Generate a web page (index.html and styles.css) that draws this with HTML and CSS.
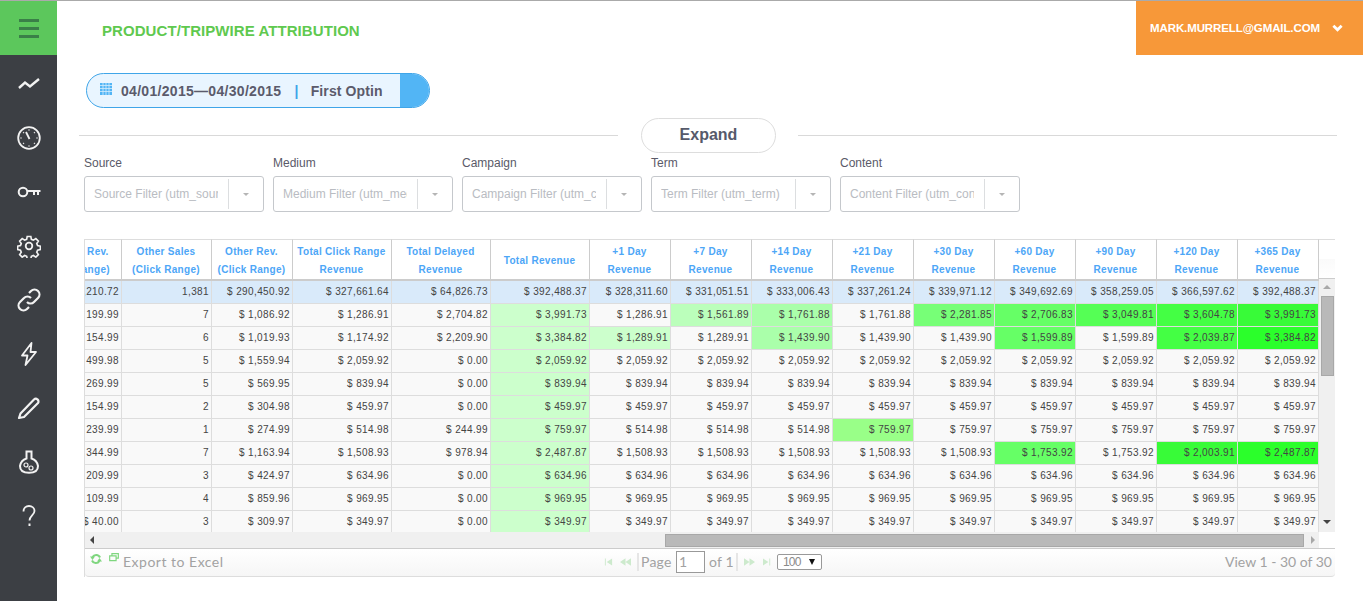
FILE: index.html
```html
<!DOCTYPE html>
<html lang="en">
<head>
<meta charset="utf-8">
<title>Product/Tripwire Attribution</title>
<link rel="stylesheet" href="styles.css">
</head>
<body>
<aside class="sidebar">
  <div class="menu-btn"><span></span><span></span><span></span></div>
  <nav class="nav">
    <a class="nav-item"><svg viewBox="0 0 24 24" class="ico"><path d="M2 16l6-5.500 5 4L22 7" stroke-width="2.400"/></svg></a>
    <a class="nav-item"><svg viewBox="0 0 24 24" class="ico"><circle cx="12" cy="12" r="10.800" stroke-width="1.800"/><path d="M9 6l3.500 7" stroke-width="1.800"/><path d="M12 3.500v1M17.800 6.200l-.7.7M20.500 12h-1M17.800 17.800l-.7-.7M12 20.500v-1M6.200 17.800l.7-.7M3.500 12h1M6.200 6.200l.7.7" stroke-width="1.500"/></svg></a>
    <a class="nav-item"><svg viewBox="0 0 24 24" class="ico"><circle cx="6" cy="12" r="4.300" stroke-width="2"/><path d="M10.300 11H23.500M17 11v4M21 11v4" stroke-width="2"/></svg></a>
    <a class="nav-item"><svg viewBox="0 0 24 24" class="ico"><circle cx="12" cy="12" r="3.300" stroke-width="1.800"/><path d="M10 1.500h4l.6 3.200 2.200.9 2.700-1.800 2.800 2.800-1.800 2.700.9 2.200 3.100.6v3.800l-3.100.6-.9 2.200 1.800 2.700-2.800 2.800-2.700-1.800-2.200.9-.6 2.700h-4l-.6-2.700-2.200-.9-2.700 1.800-2.800-2.800 1.800-2.700-.9-2.200-3.100-.6v-3.800l3.100-.6.9-2.200-1.800-2.700 2.800-2.800 2.700 1.800 2.200-.9z" stroke-width="1.800" transform="translate(1.100 1.100) scale(.91)"/></svg></a>
    <a class="nav-item"><svg viewBox="0 0 24 24" class="ico"><path d="M10 14a4.800 4.800 0 0 0 7 0l4-4a4.900 4.900 0 0 0-7-7l-2 2" stroke-width="2.200"/><path d="M14 10a4.800 4.800 0 0 0-7 0l-4 4a4.900 4.900 0 0 0 7 7l2-2" stroke-width="2.200"/></svg></a>
    <a class="nav-item"><svg viewBox="0 0 24 24" class="ico"><path d="M14.500 1L5 13.500h5.500L8.500 23 19 10h-5.500z" stroke-width="1.800" stroke-linejoin="round"/></svg></a>
    <a class="nav-item"><svg viewBox="0 0 24 24" class="ico"><path d="M3.500 17.500L17 3.500a2.500 2.500 0 0 1 3.500 0 2.500 2.500 0 0 1 .5 3.500L7 21l-5 1z" stroke-width="2.200" stroke-linejoin="round"/></svg></a>
    <a class="nav-item"><svg viewBox="0 0 24 24" class="ico"><path d="M8.500 1.500h7M9.500 1.500v7a9.500 9.500 0 0 0-6.500 7.500c0 4 3 6.800 9 6.800s9-2.800 9-6.800a9.500 9.500 0 0 0-6.500-7.500v-7" stroke-width="2"/><circle cx="9" cy="15" r="2" stroke-width="1.200"/><circle cx="14" cy="18" r="2" stroke-width="1.200"/></svg></a>
    <a class="nav-item"><svg viewBox="0 0 24 24" class="ico"><path d="M6.500 7.500C6.500 4 9 2 12 2s5.500 2 5.500 5c0 4-5 5-5 9.500" stroke-width="1.800"/><path d="M12.500 19.500v2.500" stroke-width="2"/></svg></a>
  </nav>
</aside>
<main class="main">
  <header class="topbar">
    <h1 class="title">PRODUCT/TRIPWIRE ATTRIBUTION</h1>
    <div class="user"><span>MARK.MURRELL@GMAIL.COM</span><svg viewBox="0 0 12 8" class="chev"><path d="M1.500 1.500L6 6l4.500-4.500"/></svg></div>
  </header>
  <section class="content">
    <div class="pill">
      <div class="pill-body">
        <svg viewBox="0 0 12 12" class="cal"><rect width="12" height="12" fill="#52b5f5"/><path d="M0 2.500h12M0 5.500h12M0 8.500h12M3 0v12M6 0v12M9 0v12" stroke="#d6ecfd" stroke-width=".8"/></svg>
        <span class="pill-dates">04/01/2015—04/30/2015</span>
        <span class="pill-sep">|</span>
        <span class="pill-opt">First Optin</span>
      </div>
      <div class="pill-end"></div>
    </div>
    <div class="expand-row">
      <span class="rule"></span>
      <button class="expand">Expand</button>
      <span class="rule"></span>
    </div>
    <div class="filters">
      <div class="filter"><label>Source</label><div class="select"><span class="ph">Source Filter (utm_source)</span><span class="caret-box"><i class="caret"></i></span></div></div>
      <div class="filter"><label>Medium</label><div class="select"><span class="ph">Medium Filter (utm_medium)</span><span class="caret-box"><i class="caret"></i></span></div></div>
      <div class="filter"><label>Campaign</label><div class="select"><span class="ph">Campaign Filter (utm_campaign)</span><span class="caret-box"><i class="caret"></i></span></div></div>
      <div class="filter"><label>Term</label><div class="select"><span class="ph">Term Filter (utm_term)</span><span class="caret-box"><i class="caret"></i></span></div></div>
      <div class="filter"><label>Content</label><div class="select"><span class="ph">Content Filter (utm_content)</span><span class="caret-box"><i class="caret"></i></span></div></div>
    </div>
    <div class="grid">
      <div class="grid-top">
        <div class="clip">
          <table class="tbl">
            <colgroup><col class="c90"><col class="c90"><col class="c81"><col class="c99"><col class="c99"><col class="c99"><col class="c81"><col class="c81"><col class="c81"><col class="c81"><col class="c81"><col class="c81"><col class="c81"><col class="c81"><col class="c81"></colgroup>
            <thead><tr>
              <th>Tripwire Rev.<br>(Click Range)</th><th>Other Sales<br>(Click Range)</th><th>Other Rev.<br>(Click Range)</th><th>Total Click Range<br>Revenue</th><th>Total Delayed<br>Revenue</th><th>Total Revenue</th><th>+1 Day<br>Revenue</th><th>+7 Day<br>Revenue</th><th>+14 Day<br>Revenue</th><th>+21 Day<br>Revenue</th><th>+30 Day<br>Revenue</th><th>+60 Day<br>Revenue</th><th>+90 Day<br>Revenue</th><th>+120 Day<br>Revenue</th><th>+365 Day<br>Revenue</th>
            </tr></thead>
            <tbody>
              <tr class="total"><td>$ 101,210.72</td><td>1,381</td><td>$ 290,450.92</td><td>$ 327,661.64</td><td>$ 64,826.73</td><td>$ 392,488.37</td><td>$ 328,311.60</td><td>$ 331,051.51</td><td>$ 333,006.43</td><td>$ 337,261.24</td><td>$ 339,971.12</td><td>$ 349,692.69</td><td>$ 358,259.05</td><td>$ 366,597.62</td><td>$ 392,488.37</td></tr>
              <tr><td>$ 199.99</td><td>7</td><td>$ 1,086.92</td><td>$ 1,286.91</td><td>$ 2,704.82</td><td class="g1">$ 3,991.73</td><td>$ 1,286.91</td><td class="g2">$ 1,561.89</td><td class="g3">$ 1,761.88</td><td>$ 1,761.88</td><td class="g5">$ 2,281.85</td><td class="g6">$ 2,706.83</td><td class="g7">$ 3,049.81</td><td class="g8">$ 3,604.78</td><td class="g9">$ 3,991.73</td></tr>
              <tr><td>$ 154.99</td><td>6</td><td>$ 1,019.93</td><td>$ 1,174.92</td><td>$ 2,209.90</td><td class="g1">$ 3,384.82</td><td class="g1">$ 1,289.91</td><td>$ 1,289.91</td><td class="g3">$ 1,439.90</td><td>$ 1,439.90</td><td>$ 1,439.90</td><td class="g6">$ 1,599.89</td><td>$ 1,599.89</td><td class="g8">$ 2,039.87</td><td class="g10">$ 3,384.82</td></tr>
              <tr><td>$ 499.98</td><td>5</td><td>$ 1,559.94</td><td>$ 2,059.92</td><td>$ 0.00</td><td class="g1">$ 2,059.92</td><td>$ 2,059.92</td><td>$ 2,059.92</td><td>$ 2,059.92</td><td>$ 2,059.92</td><td>$ 2,059.92</td><td>$ 2,059.92</td><td>$ 2,059.92</td><td>$ 2,059.92</td><td>$ 2,059.92</td></tr>
              <tr><td>$ 269.99</td><td>5</td><td>$ 569.95</td><td>$ 839.94</td><td>$ 0.00</td><td class="g1">$ 839.94</td><td>$ 839.94</td><td>$ 839.94</td><td>$ 839.94</td><td>$ 839.94</td><td>$ 839.94</td><td>$ 839.94</td><td>$ 839.94</td><td>$ 839.94</td><td>$ 839.94</td></tr>
              <tr><td>$ 154.99</td><td>2</td><td>$ 304.98</td><td>$ 459.97</td><td>$ 0.00</td><td class="g1">$ 459.97</td><td>$ 459.97</td><td>$ 459.97</td><td>$ 459.97</td><td>$ 459.97</td><td>$ 459.97</td><td>$ 459.97</td><td>$ 459.97</td><td>$ 459.97</td><td>$ 459.97</td></tr>
              <tr><td>$ 239.99</td><td>1</td><td>$ 274.99</td><td>$ 514.98</td><td>$ 244.99</td><td class="g1">$ 759.97</td><td>$ 514.98</td><td>$ 514.98</td><td>$ 514.98</td><td class="g4">$ 759.97</td><td>$ 759.97</td><td>$ 759.97</td><td>$ 759.97</td><td>$ 759.97</td><td>$ 759.97</td></tr>
              <tr><td>$ 344.99</td><td>7</td><td>$ 1,163.94</td><td>$ 1,508.93</td><td>$ 978.94</td><td class="g1">$ 2,487.87</td><td>$ 1,508.93</td><td>$ 1,508.93</td><td>$ 1,508.93</td><td>$ 1,508.93</td><td>$ 1,508.93</td><td class="g6">$ 1,753.92</td><td>$ 1,753.92</td><td class="g9">$ 2,003.91</td><td class="g10">$ 2,487.87</td></tr>
              <tr><td>$ 209.99</td><td>3</td><td>$ 424.97</td><td>$ 634.96</td><td>$ 0.00</td><td class="g1">$ 634.96</td><td>$ 634.96</td><td>$ 634.96</td><td>$ 634.96</td><td>$ 634.96</td><td>$ 634.96</td><td>$ 634.96</td><td>$ 634.96</td><td>$ 634.96</td><td>$ 634.96</td></tr>
              <tr><td>$ 109.99</td><td>4</td><td>$ 859.96</td><td>$ 969.95</td><td>$ 0.00</td><td class="g1">$ 969.95</td><td>$ 969.95</td><td>$ 969.95</td><td>$ 969.95</td><td>$ 969.95</td><td>$ 969.95</td><td>$ 969.95</td><td>$ 969.95</td><td>$ 969.95</td><td>$ 969.95</td></tr>
              <tr><td>$ 40.00</td><td>3</td><td>$ 309.97</td><td>$ 349.97</td><td>$ 0.00</td><td class="g1">$ 349.97</td><td>$ 349.97</td><td>$ 349.97</td><td>$ 349.97</td><td>$ 349.97</td><td>$ 349.97</td><td>$ 349.97</td><td>$ 349.97</td><td>$ 349.97</td><td>$ 349.97</td></tr>
            </tbody>
          </table>
        </div>
        <div class="vcol">
          <div class="vhead"></div>
          <div class="vbar">
            <i class="arr-up"></i>
            <div class="vthumb"></div>
            <i class="arr-down"></i>
          </div>
        </div>
      </div>
      <div class="hbar">
        <i class="arr-left"></i>
        <div class="hthumb"></div>
        <i class="arr-right"></i>
      </div>
      <div class="pager">
        <div class="pager-left">
          <svg viewBox="0 0 12 12" class="pg-ico"><path d="M10 4.500A4.200 4.200 0 0 0 2.500 4M2 7.500A4.200 4.200 0 0 0 9.500 8" stroke="#7fd67f" stroke-width="2" fill="none"/><path d="M0 3.500h5L2.500 7zM12 8.500H7L9.500 5z" fill="#7fd67f"/></svg>
          <svg viewBox="0 0 12 12" class="pg-ico pg-ico2"><path d="M3.500 3.500V.8h7.700v5.400H8.500M.8 3.500h7.700v5.700H.8z" stroke="#7fd67f" stroke-width="1.400" fill="none"/></svg>
          <span class="export">Export to Excel</span>
        </div>
        <div class="pager-mid">
          <svg viewBox="0 0 10 8" class="pg-nav"><path d="M1 0v8h1V0zM9 0v8L3 4z"/></svg>
          <svg viewBox="0 0 12 8" class="pg-nav pg-nav2"><path d="M6 0v8L0 4zM12 0v8L6 4z"/></svg>
          <span class="sep sep-a"></span>
          <span class="pg-word">Page</span>
          <span class="page-input">1</span>
          <span class="pg-of">of 1</span>
          <span class="sep sep-b"></span>
          <svg viewBox="0 0 12 8" class="pg-nav pg-nav3"><path d="M0 0v8l6-4zM6 0v8l6-4z"/></svg>
          <svg viewBox="0 0 10 8" class="pg-nav pg-nav4"><path d="M0 0v8l6-4zM7 0v8h1V0z"/></svg>
          <span class="page-size">100<i class="ps-arrow"></i></span>
        </div>
        <div class="pager-right">View 1 - 30 of 30</div>
      </div>
    </div>
  </section>
</main>
</body>
</html>
```
FILE: styles.css
```css
* { box-sizing: border-box; }
html, body { margin: 0; height: 601px; overflow: hidden; }
body { display: flex; background: #fff; font-family: "Liberation Sans", Arial, sans-serif; border-top: 1px solid #aaa; }

.sidebar { width: 57px; flex: none; height: 600px; background: #3c3f44; }
.menu-btn { height: 54px; background: #5cc75c; display: flex; flex-direction: column; justify-content: center; align-items: center; gap: 5px; }
.menu-btn span { display: block; width: 20px; height: 3px; background: #3a7f48; }
.nav { display: flex; flex-direction: column; padding-top: 2px; }
.nav-item { height: 54px; display: flex; align-items: center; justify-content: center; }
.ico { width: 24px; height: 24px; fill: none; stroke: #f2f2f2; }

.main { flex: 1; min-width: 0; display: flex; flex-direction: column; }
.topbar { height: 54px; display: flex; justify-content: space-between; }
.title { margin: 0; padding: 21px 0 0 45px; font-size: 15px; line-height: 18px; font-weight: 700; letter-spacing: .07px; color: #5fc94f; }
.user { width: 227px; background: #f79839; color: #fff; font-weight: 700; font-size: 11.500px; display: flex; align-items: center; padding-left: 14px; gap: 12px; letter-spacing: -.1px; }
.chev { width: 11px; height: 8px; fill: none; stroke: #fff; stroke-width: 3; }

.content { padding: 18px 26px 0 27px; }
.pill { margin-left: 2px; width: 344px; height: 35px; border: 1px solid #3fa5e8; border-radius: 18px; display: flex; overflow: hidden; background: #e9f5ff; }
.pill-body { flex: 1; display: flex; align-items: center; padding-left: 13px; font-weight: 700; font-size: 14px; color: #5b5b6b; letter-spacing: .3px; white-space: nowrap; }
.cal { width: 12px; height: 12px; margin-right: 9px; margin-top: -4px; }
.pill-sep { color: #3fa5e8; margin: 0 12px 0 13px; }
.pill-opt { letter-spacing: .12px; }
.pill-end { width: 29px; flex: none; background: #52b5f5; }

.expand-row { display: flex; align-items: center; margin: 10px 0 0 -5px; height: 35px; }
.rule { flex: 1; height: 1px; background: #d9d9d9; }
.expand { width: 135px; height: 35px; margin: 0 22px 0 23px; padding: 0 0 2px; background: #fff; border: 1px solid #ddd; border-radius: 18px; font: 700 16px "Liberation Sans", Arial, sans-serif; color: #565a6b; }

.filters { display: flex; gap: 9px; margin-top: 1px; }
.filter { width: 180px; }
.filter label { display: block; font-size: 12px; line-height: 18px; color: #5a5a68; margin-bottom: 4px; }
.select { height: 36px; border: 1px solid #c5c8cc; border-radius: 3px; display: flex; align-items: center; padding: 2px 0 2px 9px; }
.ph { width: 124px; flex: none; overflow: hidden; white-space: nowrap; font-size: 12px; color: #b9bcc2; }
.caret-box { flex: 1; align-self: stretch; margin-left: 10px; border-left: 1px solid #dcdee0; display: flex; align-items: center; justify-content: center; }
.caret { width: 0; height: 0; border: 3.500px solid transparent; border-top: 3.500px solid #b5b5b5; border-bottom: 0; }

.grid { margin-top: 27px; border-left: 1px solid #ddd; width: 1251px; }
.grid-top { display: flex; height: 293px; }
.clip { width: 1234px; height: 293px; overflow: hidden; }
.tbl { margin-left: -53px; table-layout: fixed; width: 1287px; border-collapse: separate; border-spacing: 0; font-size: 10px; letter-spacing: .38px; }
.c90 { width: 90px; }
.c81 { width: 81px; }
.c99 { width: 99px; }
.tbl th { height: 41px; padding: 3px 1px 0 0; border-top: 1px solid #ddd; border-right: 1px solid #ccc; border-bottom: 2px solid #ccc; font-weight: 700; color: #4da6f7; line-height: 18px; letter-spacing: .3px; background: #fff; overflow: hidden; white-space: nowrap; }
.tbl td { height: 23px; padding: 0 2px 1px 0; border-right: 1px solid #ddd; border-bottom: 1px solid #ddd; background: #f9f9f9; color: #444; text-align: right; white-space: nowrap; overflow: hidden; }
.tbl tr.total td { background: #d9eafa; }
.tbl td.g1 { background: #ccffcc; }
.tbl td.g2 { background: #bbffbb; }
.tbl td.g3 { background: #aaffaa; }
.tbl td.g4 { background: #99ff88; }
.tbl td.g5 { background: #77ff77; }
.tbl td.g6 { background: #66ff66; }
.tbl td.g7 { background: #55ff55; }
.tbl td.g8 { background: #44ff44; }
.tbl td.g9 { background: #38fb38; }
.tbl td.g10 { background: #2bff2b; }

.vcol { width: 16px; flex: none; display: flex; flex-direction: column; }
.vhead { height: 40px; border-top: 1px solid #ddd; border-bottom: 1px solid #ccc; background: linear-gradient(#fff, #fff 50%, #fafafa 50%, #fff); }
.vbar { flex: 1; background: #f0f0f0; display: flex; flex-direction: column; align-items: center; }
.arr-up { width: 0; height: 0; margin-top: 6px; border: 4px solid transparent; border-bottom: 4px solid #a8a8a8; border-top: 0; }
.vthumb { width: 13px; height: 80px; margin-top: 7px; background: #b9b9b9; border: 1px solid #a8a8a8; }
.arr-down { width: 0; height: 0; margin-top: auto; margin-bottom: 8px; border: 4px solid transparent; border-top: 4px solid #444; border-bottom: 0; }

.hbar { height: 16px; width: 1234px; background: #f0f0f0; display: flex; align-items: center; padding-left: 5px; }
.arr-left { width: 0; height: 0; border: 4px solid transparent; border-right: 4px solid #444; border-left: 0; }
.hthumb { width: 639px; height: 13px; margin-left: 571px; background: #b9b9b9; border: 1px solid #a8a8a8; }
.arr-right { width: 0; height: 0; margin-left: 7px; border: 4px solid transparent; border-left: 4px solid #a8a8a8; border-right: 0; }

.pager { height: 29px; padding-bottom: 2px; border-top: 1px solid #ccc; border-bottom: 1px solid #ddd; border-radius: 0 0 4px 4px; background: linear-gradient(#fff, #f6f6f6); display: flex; align-items: center; font-family: "Lato", "Liberation Sans", sans-serif; font-size: 14px; color: #a2a2a2; }
.pager-left { display: flex; align-items: center; padding-left: 5px; width: 519px; flex: none; letter-spacing: .5px; }
.pg-ico { width: 12px; height: 12px; margin-top: -5px; }
.pg-ico2 { margin-left: 7px; margin-top: -7px; width: 10px; height: 10px; }
.export { margin-left: 4px; }
.pager-mid { display: flex; align-items: center; letter-spacing: .2px; white-space: nowrap; }
.pg-nav { width: 9px; height: 8px; flex: none; fill: #cdeacd; }
.pg-nav2 { margin-left: 7px; width: 11px; }
.pg-nav3 { margin-left: 6px; width: 11px; }
.pg-nav4 { margin-left: 8px; }
.sep { width: 2px; height: 18px; background: #e6e6e6; }
.sep-a { margin-left: 6px; }
.sep-b { margin-left: 3px; }
.pg-word { margin-left: 2px; width: 30px; }
.page-input { width: 29px; height: 22px; margin-left: 5px; border: 1px solid #999; background: #fff; padding-left: 2px; line-height: 20px; }
.pg-of { margin-left: 4px; width: 24px; }
.page-size { width: 45px; height: 16px; margin-left: 5px; border: 1px solid #999; border-radius: 2px; background: #fff; padding-left: 5px; font: 12px/15px "Liberation Sans", sans-serif; letter-spacing: -.8px; position: relative; color: #8a8a8a; }
.ps-arrow { position: absolute; right: 6px; top: 4px; width: 0; height: 0; border-style: solid; border-color: #111 transparent transparent; border-width: 6px 3.500px 0; }
.pager-right { margin-left: auto; padding-right: 3px; }
```
